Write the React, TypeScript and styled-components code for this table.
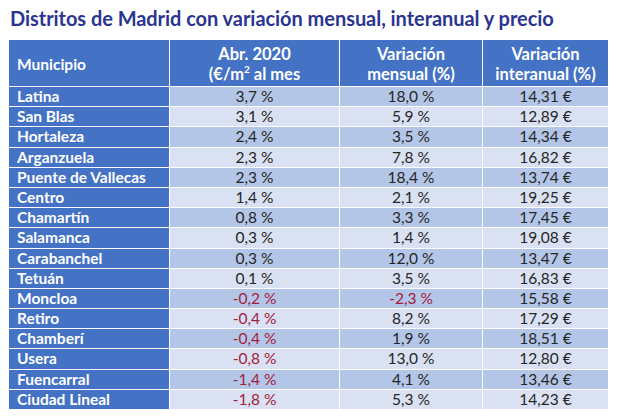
import React from 'react';
import { createGlobalStyle, styled } from 'styled-components';

const GlobalStyle = createGlobalStyle`
  html, body {
    margin: 0;
    padding: 0;
    background: #ffffff;
  }
  body {
    font-family: Lato, "Open Sans", sans-serif;
  }
`;

const Page = styled.div`
  width: 618px;
  height: 419px;
  padding: 5px 0 0 9px;
  box-sizing: border-box;
  overflow: hidden;
`;

const Title = styled.h1`
  margin: 0 0 9px 1px;
  font-size: 20px;
  line-height: 26px;
  font-weight: 700;
  color: #2b3591;
  letter-spacing: -0.05px;
`;

const Table = styled.div`
  display: grid;
  grid-template-columns: 160px 169px 142px 125px;
  grid-template-rows: 46px;
  grid-auto-rows: 19.2px;
  gap: 1px;
  width: 599px;
`;

const HeadCell = styled.div<{ $left?: boolean }>`
  background: #4472c4;
  color: #ffffff;
  font-weight: 700;
  font-size: ${({ $left }) => ($left ? '15.5px' : '16.5px')};
  line-height: 20px;
  display: flex;
  flex-direction: column;
  justify-content: center;
  align-items: ${({ $left }) => ($left ? 'flex-start' : 'center')};
  text-align: ${({ $left }) => ($left ? 'left' : 'center')};
  padding: ${({ $left }) => ($left ? '0 0 0 8px' : '0')};
  padding-top: 1px;

  sup {
    font-size: 10px;
    line-height: 0;
    vertical-align: 7px;
  }
`;

const NameCell = styled.div`
  background: #4472c4;
  color: #ffffff;
  font-weight: 700;
  font-size: 15.5px;
  line-height: 19px;
  padding-left: 8px;
  white-space: nowrap;
`;

const ValueCell = styled.div<{ $odd: boolean; $neg?: boolean }>`
  background: ${({ $odd }) => ($odd ? '#b4c6e7' : '#d9e1f2')};
  color: ${({ $neg }) => ($neg ? '#a3203c' : '#262626')};
  font-size: 15.5px;
  line-height: 19px;
  text-align: center;
  white-space: nowrap;
`;

type Row = [string, string, string, string];

const rows: Row[] = [
  ['Latina', '3,7 %', '18,0 %', '14,31 €'],
  ['San Blas', '3,1 %', '5,9 %', '12,89 €'],
  ['Hortaleza', '2,4 %', '3,5 %', '14,34 €'],
  ['Arganzuela', '2,3 %', '7,8 %', '16,82 €'],
  ['Puente de Vallecas', '2,3 %', '18,4 %', '13,74 €'],
  ['Centro', '1,4 %', '2,1 %', '19,25 €'],
  ['Chamartín', '0,8 %', '3,3 %', '17,45 €'],
  ['Salamanca', '0,3 %', '1,4 %', '19,08 €'],
  ['Carabanchel', '0,3 %', '12,0 %', '13,47 €'],
  ['Tetuán', '0,1 %', '3,5 %', '16,83 €'],
  ['Moncloa', '-0,2 %', '-2,3 %', '15,58 €'],
  ['Retiro', '-0,4 %', '8,2 %', '17,29 €'],
  ['Chamberí', '-0,4 %', '1,9 %', '18,51 €'],
  ['Usera', '-0,8 %', '13,0 %', '12,80 €'],
  ['Fuencarral', '-1,4 %', '4,1 %', '13,46 €'],
  ['Ciudad Lineal', '-1,8 %', '5,3 %', '14,23 €'],
];

export default function App() {
  return (
    <>
      <GlobalStyle />
      <Page>
        <Title>Distritos de Madrid con variación mensual, interanual y precio</Title>
        <Table>
          <HeadCell $left>Municipio</HeadCell>
          <HeadCell>
            <span>Abr. 2020</span>
            <span>
              (€/m<sup>2</sup> al mes
            </span>
          </HeadCell>
          <HeadCell>
            <span>Variación</span>
            <span>mensual (%)</span>
          </HeadCell>
          <HeadCell>
            <span>Variación</span>
            <span>interanual (%)</span>
          </HeadCell>
          {rows.map(([name, abr, mensual, precio], i) => {
            const odd = i % 2 === 0;
            return (
              <React.Fragment key={name}>
                <NameCell>{name}</NameCell>
                <ValueCell $odd={odd} $neg={abr.startsWith('-')}>
                  {abr}
                </ValueCell>
                <ValueCell $odd={odd} $neg={mensual.startsWith('-')}>
                  {mensual}
                </ValueCell>
                <ValueCell $odd={odd}>{precio}</ValueCell>
              </React.Fragment>
            );
          })}
        </Table>
      </Page>
    </>
  );
}
